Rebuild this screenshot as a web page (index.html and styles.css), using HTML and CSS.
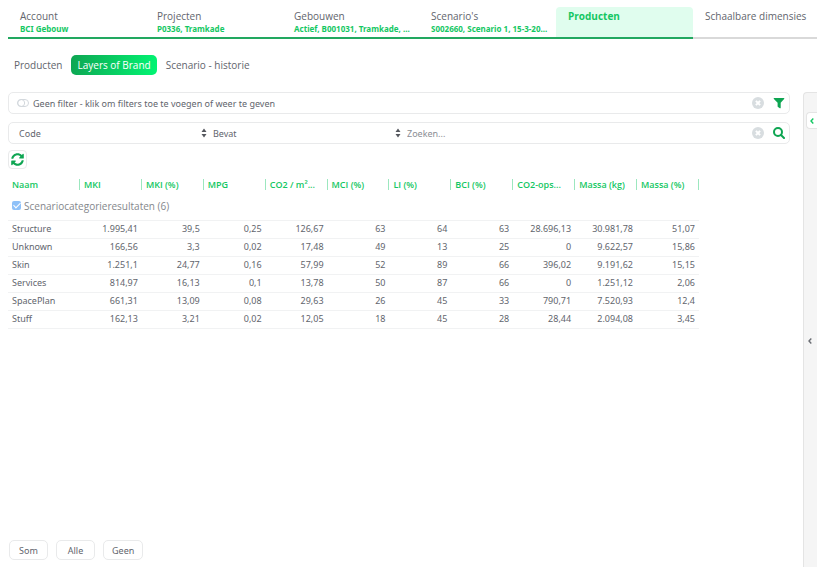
FILE: index.html
```html
<!DOCTYPE html>
<html lang="nl">
<head>
    <meta charset="UTF-8">
    <meta name="viewport" content="width=device-width, initial-scale=1.0">
    <title>BCI Gebouw</title>
    <link rel="stylesheet" href="styles.css">
</head>
<body>
    <nav class="tabs">
        <a href="#" class="tab">Account<span class="sub">BCI Gebouw</span></a>
        <a href="#" class="tab">Projecten<span class="sub">P0336, Tramkade</span></a>
        <a href="#" class="tab">Gebouwen<span class="sub">Actief, B001031, Tramkade, ...</span></a>
        <a href="#" class="tab">Scenario's<span class="sub">S002660, Scenario 1, 15-3-20...</span></a>
        <a href="#" class="tab active">Producten</a>
        <a href="#" class="tab next">Schaalbare dimensies</a>
    </nav>

    <nav class="subtabs">
        <a href="#" class="subtab">Producten</a>
        <a href="#" class="subtab active">Layers of Brand</a>
        <a href="#" class="subtab">Scenario - historie</a>
    </nav>

    <div class="content">
        <main class="main">
            <div class="bar">
                <svg class="toggle" viewBox="0 0 12 8"><rect x="0.5" y="0.5" width="11" height="7" rx="3.5"/><circle cx="4.2" cy="4" r="3.5"/></svg>
                <button class="filtertext">Geen filter - klik om filters toe te voegen of weer te geven</button>
                <button class="icon" aria-label="Wissen">
                    <svg class="clear" viewBox="0 0 12 12"><circle cx="6" cy="6" r="6"/><path d="M3.9 3.9l4.2 4.2M8.1 3.9L3.9 8.1"/></svg>
                </button>
                <button class="icon" aria-label="Filter">
                    <svg class="funnel" viewBox="0 0 12 12"><path d="M1.300 0.900h9.400c.6 0 .8.6.4 1L7.700 5.800v5c0 .5-.5.7-.9.4L5 9.900c-.2-.2-.4-.4-.4-.7V5.800L.9 1.900c-.4-.4-.2-1 .4-1z"/></svg>
                </button>
            </div>

            <div class="bar">
                <div class="choice">
                    <select class="select" aria-label="Veld">
                        <option>Code</option>
                    </select>
                    <svg class="sort" viewBox="0 0 6 10"><path d="M3 0.500l2.500 3.500h-5zM3 9.500L0.500 6h5z"/></svg>
                </div>
                <div class="choice">
                    <select class="select" aria-label="Voorwaarde">
                        <option>Bevat</option>
                    </select>
                    <svg class="sort" viewBox="0 0 6 10"><path d="M3 0.500l2.500 3.500h-5zM3 9.500L0.500 6h5z"/></svg>
                </div>
                <input type="text" class="search" placeholder="Zoeken..." aria-label="Zoeken">
                <button class="icon" aria-label="Wissen">
                    <svg class="clear" viewBox="0 0 12 12"><circle cx="6" cy="6" r="6"/><path d="M3.9 3.9l4.2 4.2M8.1 3.9L3.9 8.1"/></svg>
                </button>
                <button class="icon" aria-label="Zoek">
                    <svg class="lens" viewBox="0 0 12 12"><circle cx="5" cy="5" r="4"/><path d="M8 8l3 3"/></svg>
                </button>
            </div>

            <button class="refresh" aria-label="Vernieuwen">
                <svg viewBox="0 0 512 512"><path d="M370.700 133.300C339.500 104 298.900 88 255.800 88c-77.500.1-144.300 53.200-162.800 126.900-1.300 5.400-6.100 9.200-11.700 9.200H24.100c-7.500 0-13.200-6.800-11.800-14.200C33.900 94.900 134.800 8 256 8c66.400 0 126.800 26.100 171.300 68.700L463 41C478.100 25.900 504 36.600 504 57.900V192c0 13.300-10.700 24-24 24H345.900c-21.400 0-32.100-25.900-17-41zM32 296h134.100c21.400 0 32.100 25.900 17 41l-41.800 41.800c31.300 29.300 71.800 45.300 114.900 45.200 77.500-.1 144.300-53.200 162.800-126.800 1.300-5.400 6.100-9.200 11.700-9.200h57.300c7.500 0 13.200 6.800 11.800 14.200C478.200 417.100 377.200 504 256 504c-66.400 0-126.800-26.100-171.300-68.700L49 471C33.900 486.100 8 475.400 8 454.100V320c0-13.300 10.700-24 24-24z"/></svg>
            </button>

            <table class="results">
                <thead>
                    <tr>
                        <th class="name">Naam</th>
                        <th>MKI</th>
                        <th>MKI (%)</th>
                        <th>MPG</th>
                        <th>CO2 / m²...</th>
                        <th>MCI (%)</th>
                        <th>LI (%)</th>
                        <th>BCI (%)</th>
                        <th>CO2-ops...</th>
                        <th>Massa (kg)</th>
                        <th>Massa (%)</th>
                    </tr>
                </thead>
                <tbody>
                    <tr class="group">
                        <td colspan="11">
                            <label class="grouplabel"><input type="checkbox" class="check" checked disabled>Scenariocategorieresultaten (6)</label>
                        </td>
                    </tr>
                    <tr><td>Structure</td><td>1.995,41</td><td>39,5</td><td>0,25</td><td>126,67</td><td>63</td><td>64</td><td>63</td><td>28.696,13</td><td>30.981,78</td><td>51,07</td></tr>
                    <tr><td>Unknown</td><td>166,56</td><td>3,3</td><td>0,02</td><td>17,48</td><td>49</td><td>13</td><td>25</td><td>0</td><td>9.622,57</td><td>15,86</td></tr>
                    <tr><td>Skin</td><td>1.251,1</td><td>24,77</td><td>0,16</td><td>57,99</td><td>52</td><td>89</td><td>66</td><td>396,02</td><td>9.191,62</td><td>15,15</td></tr>
                    <tr><td>Services</td><td>814,97</td><td>16,13</td><td>0,1</td><td>13,78</td><td>50</td><td>87</td><td>66</td><td>0</td><td>1.251,12</td><td>2,06</td></tr>
                    <tr><td>SpacePlan</td><td>661,31</td><td>13,09</td><td>0,08</td><td>29,63</td><td>26</td><td>45</td><td>33</td><td>790,71</td><td>7.520,93</td><td>12,4</td></tr>
                    <tr><td>Stuff</td><td>162,13</td><td>3,21</td><td>0,02</td><td>12,05</td><td>18</td><td>45</td><td>28</td><td>28,44</td><td>2.094,08</td><td>3,45</td></tr>
                </tbody>
            </table>

            <div class="actions">
                <button class="action">Som</button>
                <button class="action">Alle</button>
                <button class="action">Geen</button>
            </div>
        </main>

        <aside class="side">
            <button class="sidetab" aria-label="Paneel openen">
                <svg viewBox="0 0 4 6"><path d="M3.300 0.500L1 3l2.300 2.500"/></svg>
            </button>
            <button class="collapse" aria-label="Uitklappen">
                <svg viewBox="0 0 4 6"><path d="M3.300 0.500L1 3l2.300 2.500"/></svg>
            </button>
        </aside>
    </div>
</body>
</html>
```
FILE: styles.css
```css
* {
    box-sizing: border-box;
}

body {
    margin: 0;
    padding: 7px 0 0 8px;
    height: 100vh;
    display: flex;
    flex-direction: column;
    overflow: hidden;
    background: #fff;
    color: #62656d;
    font-family: "Noto Sans", "Open Sans", sans-serif;
    font-size: 9px;
}

button, input, select {
    font: inherit;
    color: inherit;
    border: 0;
    padding: 0;
    margin: 0;
    background: none;
}

a {
    color: inherit;
    text-decoration: none;
}

svg {
    display: block;
}

.tabs {
    display: flex;
    height: 32px;
    flex: none;
}

.tab {
    flex: 0 0 137px;
    min-width: 0;
    padding: 3px 0 0 12px;
    border-bottom: 2px solid #22a860;
    font-family: "Open Sans", sans-serif;
    font-size: 10px;
    line-height: 13px;
    white-space: nowrap;
}

.tab.active {
    background: #e0fdee;
    border-radius: 4px 4px 0 0;
    color: #14c763;
    font-weight: bold;
}

.tab.next {
    flex: 1;
    border-color: #d9d9d9;
}

.sub {
    display: block;
    color: #14c763;
    font-family: "Noto Sans", sans-serif;
    font-size: 8px;
    font-weight: bold;
    line-height: 11px;
}

.subtabs {
    display: flex;
    flex: none;
    margin-top: 16px;
    height: 20px;
    font-family: "Open Sans", sans-serif;
    font-size: 10px;
    line-height: 20px;
}

.subtab {
    padding: 0 6px;
    margin-right: 3px;
}

.subtab.active {
    border-radius: 5px;
    background: linear-gradient(100deg, #0ea552, #02f573);
    color: #fff;
}

.content {
    display: flex;
    flex: 1;
    gap: 13px;
    margin-top: 17px;
}

.main {
    flex: 1;
    display: flex;
    flex-direction: column;
    align-items: flex-start;
}

.bar {
    display: flex;
    align-items: center;
    align-self: stretch;
    height: 22px;
    margin-bottom: 8px;
    padding: 0 4px 0 8px;
    border: 1px solid #e9eaeb;
    border-radius: 5px;
}

.toggle {
    width: 12px;
    height: 8px;
    fill: none;
    stroke: #d3d8dd;
}

.filtertext {
    flex: 1;
    padding-left: 4px;
    text-align: left;
}

.icon {
    margin-left: 9px;
}

.icon svg {
    width: 12px;
    height: 12px;
}

.clear {
    fill: #d8dde0;
    stroke: #fff;
    stroke-width: 2;
}

.clear circle {
    stroke: none;
}

.funnel {
    fill: #0ea552;
}

.lens {
    fill: none;
    stroke: #0ea552;
    stroke-width: 2;
    stroke-linecap: round;
}

.choice {
    display: flex;
    align-items: center;
    flex: 0 0 25%;
    margin-right: 2px;
}

.select {
    flex: 1;
    appearance: none;
    padding-left: 2px;
}

.sort {
    width: 6px;
    height: 10px;
    margin-right: 2px;
    fill: #55585e;
}

.search {
    flex: 1;
    min-width: 0;
    padding-left: 2px;
    outline: 0;
}

.search::placeholder {
    color: #8b8e94;
}

.refresh {
    display: grid;
    place-items: center;
    width: 19px;
    height: 19px;
    margin-top: -2px;
    border: 1px solid #e9eaeb;
    border-radius: 4px;
}

.refresh svg {
    width: 13px;
    height: 13px;
    fill: #0ea552;
}

.results {
    table-layout: fixed;
    width: 691px;
    margin-top: 8px;
    border-collapse: collapse;
}

.results th {
    padding: 0 0 0 4px;
    height: 15px;
    color: #14c763;
    font-family: "Open Sans", sans-serif;
    font-size: 9px;
    font-weight: 600;
    line-height: 12px;
    text-align: left;
    white-space: nowrap;
    background: linear-gradient(#9ce7bf, #9ce7bf) right center / 1px 11px no-repeat;
}

.results .name {
    width: 72px;
}

.results td {
    height: 18px;
    padding: 0 4px;
    border-bottom: 1px solid #f1f2f3;
    font-size: 9px;
    line-height: 12px;
    text-align: right;
}

.results td:first-child {
    text-align: left;
}

.results .group td {
    height: 28px;
}

.grouplabel {
    display: flex;
    align-items: center;
    gap: 3px;
    color: #84878c;
    font-family: "Open Sans", sans-serif;
    font-size: 10px;
}

.check {
    appearance: none;
    width: 9px;
    height: 9px;
    border-radius: 2px;
    background: #8fc1f8;
    display: grid;
    place-items: center;
}

.check:checked::before {
    content: "";
    width: 3px;
    height: 6px;
    margin-bottom: 2px;
    border: solid #fff;
    border-width: 0 1px 1px 0;
    transform: rotate(45deg);
}

.actions {
    display: flex;
    gap: 8px;
    margin-top: auto;
    padding: 0 0 7px 1px;
}

.action {
    min-width: 39px;
    height: 20px;
    padding: 0 8px;
    border: 1px solid #e9eaeb;
    border-radius: 5px;
}

.side {
    display: flex;
    flex-direction: column;
    align-items: flex-end;
    width: 14px;
    border: 1px solid #e4e4e4;
    border-width: 1px 0 0 1px;
    border-radius: 4px 0 0 0;
    background: #f5f5f5;
}

.sidetab {
    display: grid;
    place-items: center;
    width: 11px;
    height: 17px;
    margin-top: 19px;
    border: 1px solid #e4e4e4;
    border-right: 0;
    border-radius: 4px 0 0 4px;
    background: #fff;
}

.side svg {
    width: 4px;
    height: 6px;
    fill: none;
    stroke: #14c763;
    stroke-width: 1.4;
}

.side .collapse {
    margin: 209px 5px 0 0;
}

.side .collapse svg {
    stroke: #6b6e74;
}
```
